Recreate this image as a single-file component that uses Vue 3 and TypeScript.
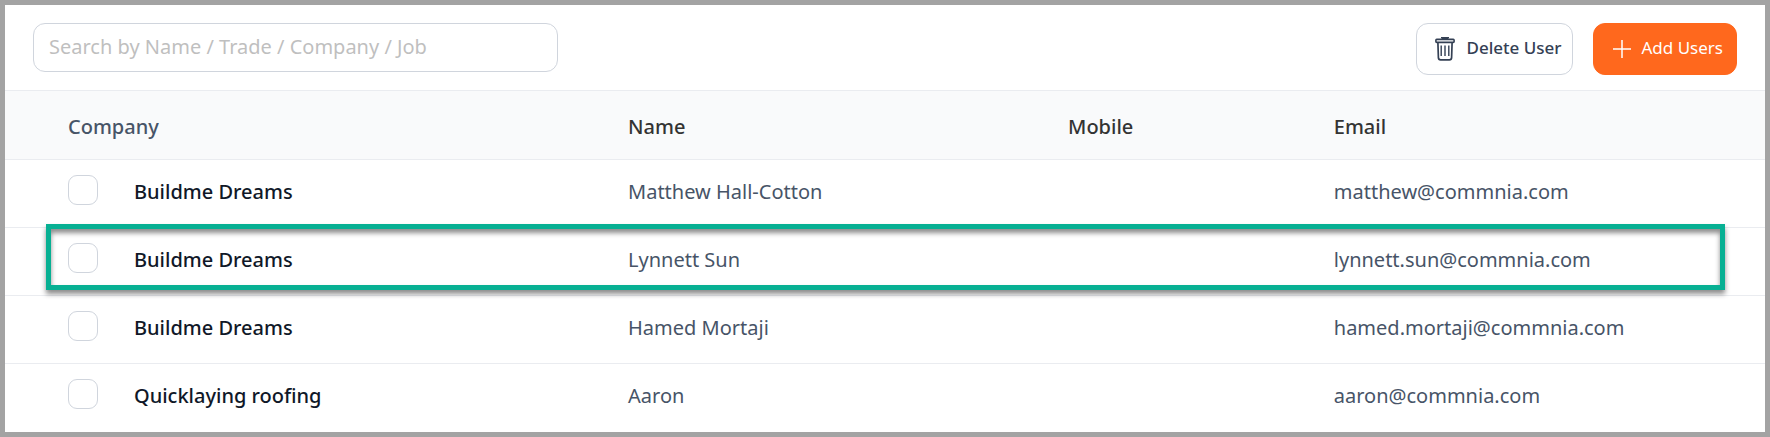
<script setup lang="ts">
import { ref } from 'vue'

interface User {
  id: number
  company: string
  name: string
  mobile: string
  email: string
  highlighted?: boolean
}

const query = ref('')
const selected = ref<number[]>([])
const users: User[] = [
  { id: 1, company: 'Buildme Dreams', name: 'Matthew Hall-Cotton', mobile: '', email: 'matthew@commnia.com' },
  { id: 2, company: 'Buildme Dreams', name: 'Lynnett Sun', mobile: '', email: 'lynnett.sun@commnia.com', highlighted: true },
  { id: 3, company: 'Buildme Dreams', name: 'Hamed Mortaji', mobile: '', email: 'hamed.mortaji@commnia.com' },
  { id: 4, company: 'Quicklaying roofing', name: 'Aaron', mobile: '', email: 'aaron@commnia.com' },
]
</script>

<template>
  <main class="page">
    <header class="toolbar">
      <input v-model="query" class="search" type="text" aria-label="Search users" placeholder="Search by Name / Trade / Company / Job" />
      <div class="actions">
        <button class="btn delete" type="button">
          <svg width="20" height="24" viewBox="0 0 20 24" fill="none" stroke="currentColor" aria-hidden="true">
            <path d="M7 1.6V1H13V1.6" stroke-width="2" />
            <rect x="0.9" y="2.4" width="18.2" height="3" rx="0.8" stroke-width="1.6" />
            <path d="M2.9 5.6 3.4 20.6Q3.5 22.8 5.6 22.8H14.4Q16.5 22.8 16.6 20.6L17.1 5.6" stroke-width="1.7" />
            <path d="M6.2 8.5V19M10 8.5V19M13.8 8.5V19" stroke-width="1.4" />
          </svg>
          <span>Delete User</span>
        </button>
        <button class="btn add" type="button">
          <svg width="18" height="18" viewBox="0 0 18 18" fill="none" stroke="currentColor" aria-hidden="true">
            <path d="M9 0V18M0 9H18" stroke-width="1.5" />
          </svg>
          <span>Add Users</span>
        </button>
      </div>
    </header>

    <table class="users">
      <colgroup>
        <col class="col-company" />
        <col class="col-name" />
        <col class="col-mobile" />
        <col class="col-email" />
      </colgroup>
      <thead>
        <tr>
          <th scope="col"><span class="first">Company</span></th>
          <th scope="col">Name</th>
          <th scope="col">Mobile</th>
          <th scope="col">Email</th>
        </tr>
      </thead>
      <tbody>
        <tr v-for="user in users" :key="user.id" :class="{ highlighted: user.highlighted }">
          <td>
            <label class="company">
              <input v-model="selected" type="checkbox" :value="user.id" />
              <span>{{ user.company }}</span>
            </label>
          </td>
          <td>{{ user.name }}</td>
          <td>{{ user.mobile }}</td>
          <td>{{ user.email }}</td>
        </tr>
      </tbody>
    </table>
  </main>
</template>

<style>
body {
  margin: 0;
}
</style>

<style scoped>
.page {
  box-sizing: border-box;
  min-height: 100vh;
  border: 5px solid #a3a3a3;
  background: #fff;
  color: #475467;
  font-family: "Segoe UI", "Noto Sans", "Open Sans", sans-serif;
  font-size: 20px;
  line-height: 28px;
}

.toolbar {
  display: flex;
  justify-content: space-between;
  align-items: flex-start;
  padding: 18px 28px 15px;
}

.search {
  box-sizing: border-box;
  width: 30.8%;
  height: 49px;
  padding: 0 15px 2px;
  border: 1px solid #d0d5dd;
  border-radius: 12px;
  outline: none;
  background: #fff;
  color: #344054;
  font: inherit;
}

.search::placeholder {
  color: #bfbfbf;
  opacity: 1;
}

.actions {
  display: flex;
  gap: 20px;
}

.btn {
  display: flex;
  align-items: center;
  height: 52px;
  border: 1px solid #d0d5dd;
  border-radius: 12px;
  background: #fff;
  color: #344054;
  font: inherit;
  font-size: 17px;
  font-weight: 500;
  line-height: 24px;
  white-space: nowrap;
  cursor: pointer;
}

.btn span {
  padding-bottom: 2px;
}

.delete {
  gap: 12px;
  padding: 0 11px 0 18px;
}

.add {
  gap: 10px;
  padding: 0 13px 0 19px;
  border-color: #ff681d;
  background: #ff681d;
  color: #fff;
  font-weight: 400;
}

.users {
  width: 100%;
  border-collapse: separate;
  border-spacing: 0;
  table-layout: fixed;
}

.col-company {
  width: 35.4%;
}

.col-name {
  width: 25%;
}

.col-mobile {
  width: 15.1%;
}

.col-email {
  width: 24.5%;
}

th,
td {
  box-sizing: border-box;
  height: 68px;
  padding: 0 0 4px;
  border-top: 1px solid #eaecf0;
  text-align: left;
  vertical-align: middle;
}

th {
  height: 69px;
  padding: 3px 0 0;
  background: #f9fafb;
  color: #333;
  font-weight: 500;
}

.first {
  padding-left: 63px;
  color: #475467;
}

.company {
  display: flex;
  align-items: center;
  gap: 36px;
  padding-left: 63px;
  color: #101828;
  font-weight: 500;
}

.company input {
  box-sizing: border-box;
  width: 30px;
  height: 30px;
  margin: 0 0 4px;
  appearance: none;
  border: 1px solid #d0d5dd;
  border-radius: 9px;
  background: #fff;
}

.company input:checked {
  border-color: #ff681d;
  background: #ff681d;
}

.highlighted {
  position: relative;
}

.highlighted::after {
  content: "";
  position: absolute;
  inset: -3px 40px 5px 41px;
  border: 5px solid #07b093;
  box-shadow: 0 4px 5px rgba(0, 0, 0, 0.45), inset 0 4px 5px rgba(0, 0, 0, 0.45);
  pointer-events: none;
}
</style>
